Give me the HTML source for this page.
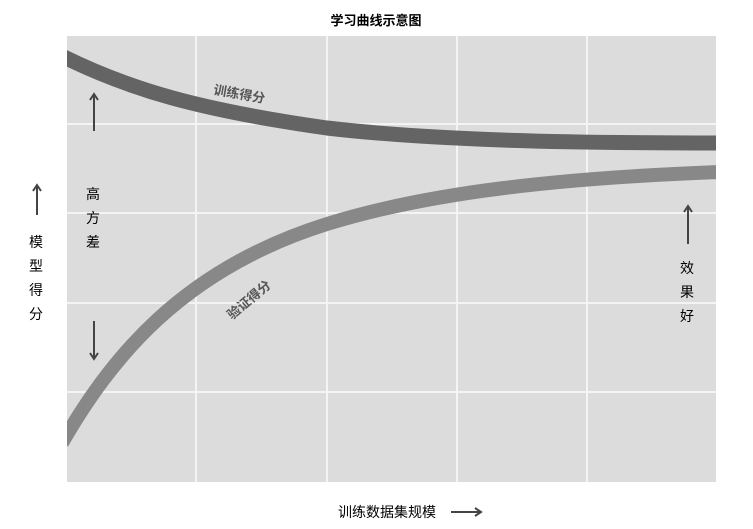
<!DOCTYPE html>
<html><head><meta charset="utf-8"><style>
body{margin:0;background:#fff;width:753px;height:529px;overflow:hidden}
svg{display:block}
text{font-family:"Liberation Sans","Noto Sans CJK SC",sans-serif}
</style></head><body>
<svg width="753" height="529" xmlns="http://www.w3.org/2000/svg">
<defs><clipPath id="c"><rect x="67" y="36" width="649" height="446"/></clipPath></defs>
<rect x="67" y="36" width="649" height="446" fill="#dcdcdc"/>
<g stroke="#f4f4f4" stroke-width="2">
<line x1="196" y1="36" x2="196" y2="482"/><line x1="327" y1="36" x2="327" y2="482"/>
<line x1="457" y1="36" x2="457" y2="482"/><line x1="587" y1="36" x2="587" y2="482"/>
<line x1="67" y1="124" x2="716" y2="124"/><line x1="67" y1="213" x2="716" y2="213"/>
<line x1="67" y1="303" x2="716" y2="303"/><line x1="67" y1="392" x2="716" y2="392"/>
</g>
<g clip-path="url(#c)">
<path d="M60,55 C130,90 200,110 327,128 C430,140 560,143 720,143" fill="none" stroke="#646464" stroke-width="15"/>
<path d="M62,443 C110,360 180,270 327,224 C430,192 560,178 720,172" fill="none" stroke="#888" stroke-width="14"/>
</g>
<text x="376" y="25" font-size="13" font-weight="bold" text-anchor="middle" fill="#000">学习曲线示意图</text>
<text x="213" y="94" font-size="13" font-weight="bold" fill="#555" transform="rotate(10 213 94)">训练得分</text>
<text x="232" y="320" font-size="13" font-weight="bold" fill="#555" transform="rotate(-40 232 320)">验证得分</text>
<g stroke="#444" stroke-width="2" fill="none">
<line x1="94" y1="95" x2="94" y2="131"/><path d="M90,100 L94,94 L98,100"/>
<line x1="94" y1="321" x2="94" y2="358"/><path d="M90,353 L94,359 L98,353"/>
<line x1="37" y1="186" x2="37" y2="215"/><path d="M33,191 L37,185 L41,191"/>
<line x1="688" y1="207" x2="688" y2="244"/><path d="M684,212 L688,206 L692,212"/>
<line x1="451" y1="512" x2="480" y2="512"/><path d="M475,508 L481,512 L475,516"/>
</g>
<g font-size="14" fill="#000" text-anchor="middle">
<text x="93" y="199">高</text><text x="93" y="223">方</text><text x="93" y="247">差</text>
<text x="36" y="247">模</text><text x="36" y="271">型</text><text x="36" y="295">得</text><text x="36" y="319">分</text>
<text x="687" y="273">效</text><text x="687" y="297">果</text><text x="687" y="321">好</text>
<text x="387" y="517">训练数据集规模</text>
</g>
</svg>
</body></html>
